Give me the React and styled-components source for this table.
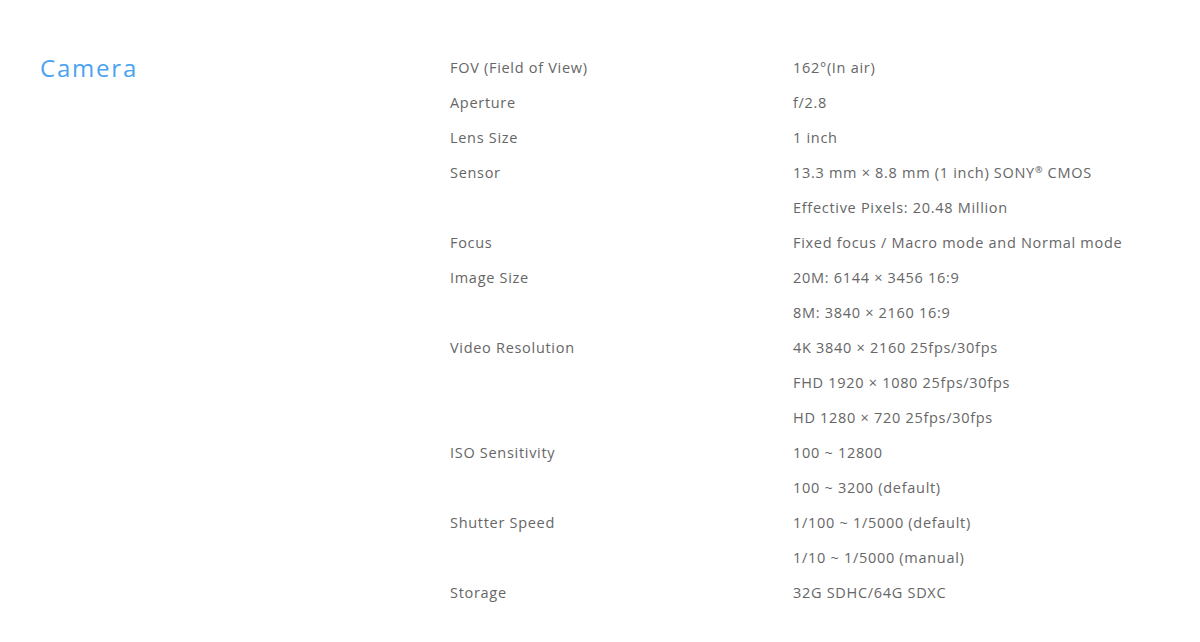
import React from 'react'
import styled, { createGlobalStyle } from 'styled-components'

const GlobalStyle = createGlobalStyle`
  body {
    margin: 0;
    background: #fff;
    font-family: "Open Sans", sans-serif;
  }
`

const specs = [
  { label: 'FOV (Field of View)', values: ['162°(In air)'] },
  { label: 'Aperture', values: ['f/2.8'] },
  { label: 'Lens Size', values: ['1 inch'] },
  { label: 'Sensor', values: [<>13.3 mm × 8.8 mm (1 inch) SONY<Sup>®</Sup> CMOS</>, 'Effective Pixels: 20.48 Million'] },
  { label: 'Focus', values: ['Fixed focus / Macro mode and Normal mode'] },
  { label: 'Image Size', values: ['20M: 6144 × 3456 16:9', '8M: 3840 × 2160 16:9'] },
  { label: 'Video Resolution', values: ['4K 3840 × 2160 25fps/30fps', 'FHD 1920 × 1080 25fps/30fps', 'HD 1280 × 720 25fps/30fps'] },
  { label: 'ISO Sensitivity', values: ['100 ~ 12800', '100 ~ 3200 (default)'] },
  { label: 'Shutter Speed', values: ['1/100 ~ 1/5000 (default)', '1/10 ~ 1/5000 (manual)'] },
  { label: 'Storage', values: ['32G SDHC/64G SDXC'] },
]

function Sup({ children }) {
  return <SupText>{children}</SupText>
}

export default function App() {
  return (
    <>
      <GlobalStyle />
      <Section>
        <Title>Camera</Title>
        <SpecTable>
          {specs.map((spec) => (
            <SpecRow key={spec.label}>
              <Label>{spec.label}</Label>
              <Values>
                {spec.values.map((v, i) => (
                  <Value key={i}>{v}</Value>
                ))}
              </Values>
            </SpecRow>
          ))}
        </SpecTable>
      </Section>
    </>
  )
}

const Section = styled.section`
  display: grid;
  grid-template-columns: 410px 1fr;
  padding: 50px 40px 0 40px;
`

const Title = styled.h2`
  margin: 0;
  font-size: 24px;
  font-weight: 500;
  line-height: 35px;
  color: #4aa3f0;
  letter-spacing: 1.8px;
`

const SpecTable = styled.div`
  display: flex;
  flex-direction: column;
`

const SpecRow = styled.div`
  display: grid;
  grid-template-columns: 343px 1fr;
`

const Label = styled.div`
  font-size: 14.5px;
  line-height: 35px;
  letter-spacing: 0.7px;
  color: #666;
`

const Values = styled.div`
  display: flex;
  flex-direction: column;
`

const Value = styled.div`
  font-size: 14.5px;
  line-height: 35px;
  letter-spacing: 0.7px;
  color: #666;
`

const SupText = styled.sup`
  font-size: 9px;
  vertical-align: 5px;
  line-height: 0;
  font-weight: 600;
`
